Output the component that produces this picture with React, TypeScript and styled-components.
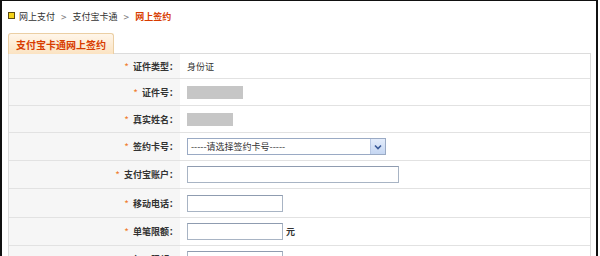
import React from "react";
import styled, { createGlobalStyle } from "styled-components";

const GlobalStyle = createGlobalStyle`
  html, body {
    margin: 0;
    padding: 0;
    background: #fff;
  }
  body {
    font-family: "Noto Sans CJK SC", "Liberation Sans", sans-serif;
    font-size: 9px;
    color: #333;
  }
`;

const Frame = styled.div`
  box-sizing: border-box;
  width: 598px;
  height: 256px;
  overflow: hidden;
  border-left: 2px solid #111;
  border-top: 1px solid #111;
  border-right: 2px solid #111;
  padding: 0 6px 0 6px;
`;

const Breadcrumb = styled.div`
  display: flex;
  align-items: center;
  height: 30px;
  gap: 3px;
  font-size: 9px;
  color: #333;
`;

const CrumbIcon = styled.span`
  box-sizing: border-box;
  width: 7px;
  height: 7px;
  border: 1px solid #5a4a10;
  background: #f3d21a;
  margin-right: 1px;
  margin-top: -2px;
`;

const Sep = styled.span`
  color: #777;
  font-size: 10px;
  margin: 0 3px;
`;

const Crumb = styled.span<{ $current?: boolean }>`
  color: ${({ $current }) => ($current ? "#d83c00" : "#333")};
  font-weight: ${({ $current }) => ($current ? 700 : 400)};
`;

const TabBar = styled.div`
  display: flex;
  margin-top: 2px;
`;

const Tab = styled.div`
  box-sizing: border-box;
  height: 21px;
  width: 106px;
  padding: 0 7px;
  display: flex;
  align-items: center;
  white-space: nowrap;
  border: 1px solid #ebcfa4;
  border-bottom: none;
  border-radius: 3px 3px 0 0;
  background: linear-gradient(#fff6ea, #fbe3c2);
  color: #d83c00;
  font-weight: 700;
  font-size: 10px;
  margin-bottom: -1px;
  position: relative;
`;

const Panel = styled.div`
  box-sizing: border-box;
  width: 583px;
  border: 1px solid #dcdcdc;
  border-bottom: none;
`;

const Row = styled.div<{ $h: number }>`
  display: grid;
  grid-template-columns: 171px 1fr;
  height: ${({ $h }) => $h}px;
  border-bottom: 1px solid #e2e2e2;
`;

const Label = styled.div`
  background: #f6f6f6;
  display: flex;
  align-items: center;
  justify-content: flex-end;
  padding-right: 2px;
  color: #333;
  font-weight: 700;
  font-size: 9px;
`;

const Star = styled.span`
  color: #f07a2c;
  margin-right: 4px;
  font-weight: 400;
  font-size: 10px;
`;

const Value = styled.div`
  display: flex;
  align-items: center;
  padding-left: 7px;
  gap: 3px;
`;

const Masked = styled.span<{ $w: number }>`
  width: ${({ $w }) => $w}px;
  height: 13px;
  background: #c6c6c6;
`;

const TextInput = styled.input<{ $w: number }>`
  box-sizing: border-box;
  width: ${({ $w }) => $w}px;
  height: 17px;
  border: 1px solid #a8b4c4;
  border-top-color: #8f9cb0;
  background: #fff;
  padding: 0 3px;
  font-size: 9px;
  outline: none;
`;

const SelectBox = styled.div`
  box-sizing: border-box;
  width: 199px;
  height: 17px;
  border: 1px solid #9aaac4;
  display: flex;
  align-items: center;
  justify-content: space-between;
  font-size: 9px;
  color: #333;
  padding-left: 3px;
`;

const SelectArrow = styled.span`
  box-sizing: border-box;
  width: 15px;
  height: 15px;
  background: linear-gradient(#e4edfb, #c5d6f2);
  border-left: 1px solid #b8c8e4;
  display: flex;
  align-items: center;
  justify-content: center;
`;

const Unit = styled.span`
  color: #333;
  font-weight: 700;
  font-size: 9px;
`;

const Field = ({
  label,
  h,
  children,
}: {
  label: string;
  h: number;
  children?: React.ReactNode;
}) => (
  <Row $h={h}>
    <Label>
      <Star>*</Star>
      {label}：
    </Label>
    <Value>{children}</Value>
  </Row>
);

export default function App() {
  return (
    <>
      <GlobalStyle />
      <Frame>
        <Breadcrumb>
          <CrumbIcon />
          <Crumb>网上支付</Crumb>
          <Sep>&gt;</Sep>
          <Crumb>支付宝卡通</Crumb>
          <Sep>&gt;</Sep>
          <Crumb $current>网上签约</Crumb>
        </Breadcrumb>
        <TabBar>
          <Tab>支付宝卡通网上签约</Tab>
        </TabBar>
        <Panel>
          <Field label="证件类型" h={24}>
            <span>身份证</span>
          </Field>
          <Field label="证件号" h={26}>
            <Masked $w={56} />
          </Field>
          <Field label="真实姓名" h={26}>
            <Masked $w={46} />
          </Field>
          <Field label="签约卡号" h={27}>
            <SelectBox>
              <span>-----请选择签约卡号-----</span>
              <SelectArrow>
                <svg width="8" height="6" viewBox="0 0 8 6">
                  <path d="M1 1.5 L4 4.5 L7 1.5" stroke="#3a5a98" strokeWidth="1.6" fill="none" />
                </svg>
              </SelectArrow>
            </SelectBox>
          </Field>
          <Field label="支付宝账户" h={27}>
            <TextInput $w={212} />
          </Field>
          <Field label="移动电话" h={28}>
            <TextInput $w={96} />
          </Field>
          <Field label="单笔限额" h={27}>
            <TextInput $w={96} />
            <Unit>元</Unit>
          </Field>
          <Field label="每日限额" h={27}>
            <TextInput $w={96} />
          </Field>
        </Panel>
      </Frame>
    </>
  );
}
